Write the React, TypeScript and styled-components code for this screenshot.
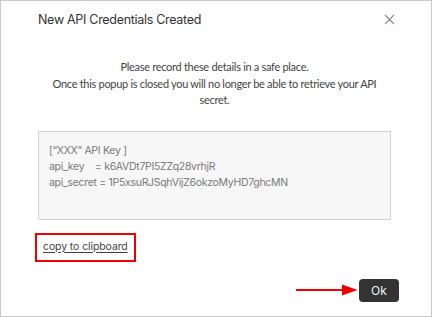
import React from 'react';
import styled, { createGlobalStyle } from 'styled-components';

const GlobalStyle = createGlobalStyle`
  html, body {
    margin: 0;
    padding: 0;
    background: #ffffff;
  }
  * {
    box-sizing: border-box;
  }
`;

const Dialog = styled.div`
  width: 432px;
  height: 317px;
  border: 1px solid #c9c9c9;
  background: #ffffff;
  display: flex;
  flex-direction: column;
  font-family: Inter, "Noto Sans", sans-serif;
`;

const Header = styled.div`
  display: flex;
  align-items: center;
  justify-content: space-between;
  padding: 9px 37px 0 37px;
  height: 28px;
`;

const Title = styled.h2`
  margin: 0;
  font-size: 12.5px;
  font-weight: 400;
  line-height: 18px;
  color: #333333;
  letter-spacing: -0.3px;
`;

const CloseButton = styled.button`
  border: none;
  background: none;
  padding: 0;
  width: 11px;
  height: 11px;
  margin-right: -1px;
  display: flex;
  cursor: pointer;
`;

const Content = styled.div`
  display: flex;
  flex-direction: column;
  padding: 0 40px 0 37px;
`;

const Message = styled.p`
  margin: 30px 0 0;
  padding: 0 10px;
  text-align: center;
  font-family: Lato, "Open Sans", sans-serif;
  font-size: 11px;
  line-height: 16.5px;
  color: #444444;
  letter-spacing: -0.3px;
`;

const KeyBox = styled.pre`
  margin: 22px 0 0;
  height: 89px;
  padding: 11px 10px;
  background: #f7f7f7;
  border: 1px solid #d2d2d2;
  font-family: Inter, "Noto Sans", sans-serif;
  font-size: 10.5px;
  line-height: 16px;
  letter-spacing: -0.3px;
  color: #7a7a7a;
  white-space: pre;
`;

const LinkFrame = styled.div`
  align-self: flex-start;
  margin: 13px 0 0 -3px;
  border: 2px solid #ee0000;
  padding: 2px 6px 3px 6px;
  font-size: 10.5px;
  line-height: 20px;
`;

const CopyLink = styled.a`
  display: block;
  font-family: Inter, "Noto Sans", sans-serif;
  font-size: 10.5px;
  line-height: 20px;
  letter-spacing: -0.1px;
  color: #444444;
  text-decoration: underline;
  text-underline-offset: 2px;
  cursor: pointer;
`;

const Footer = styled.div`
  display: flex;
  justify-content: flex-end;
  align-items: center;
  gap: 1px;
  padding: 0 32px 0 0;
  margin-top: 17px;
`;

const OkButton = styled.button`
  width: 40px;
  height: 23px;
  border: none;
  border-radius: 4px;
  background: #333333;
  color: #f2f2f2;
  font-family: Inter, "Noto Sans", sans-serif;
  font-size: 12px;
  font-weight: 400;
  cursor: pointer;
  padding: 0;
`;

const CloseIcon = () => (
  <svg width="11" height="11" viewBox="0 0 11 11">
    <path d="M1 1 L10 10 M10 1 L1 10" stroke="#8a8a8a" strokeWidth="1.1" fill="none" />
  </svg>
);

const Arrow = () => (
  <svg width="62" height="12" viewBox="0 0 62 12">
    <line x1="0" y1="6" x2="48" y2="6" stroke="#ee0000" strokeWidth="2" />
    <polygon points="46,0.5 61.5,6 46,11.5" fill="#ee0000" />
  </svg>
);

const keyText = `[“XXX” API Key ]
api_key    = k6AVDt7PI5ZZq28vrhjR
api_secret = 1P5xsuRJSqhVijZ6okzoMyHD7ghcMN`;

const App: React.FC = () => {
  return (
    <>
      <GlobalStyle />
      <Dialog>
        <Header>
          <Title>New API Credentials Created</Title>
          <CloseButton aria-label="Close">
            <CloseIcon />
          </CloseButton>
        </Header>
        <Content>
          <Message>
            Please record these details in a safe place.
            <br />
            Once this popup is closed you will no longer be able to retrieve your API secret.
          </Message>
          <KeyBox>{keyText}</KeyBox>
          <LinkFrame>
            <CopyLink>copy to clipboard</CopyLink>
          </LinkFrame>
        </Content>
        <Footer>
          <Arrow />
          <OkButton>Ok</OkButton>
        </Footer>
      </Dialog>
    </>
  );
};

export default App;
